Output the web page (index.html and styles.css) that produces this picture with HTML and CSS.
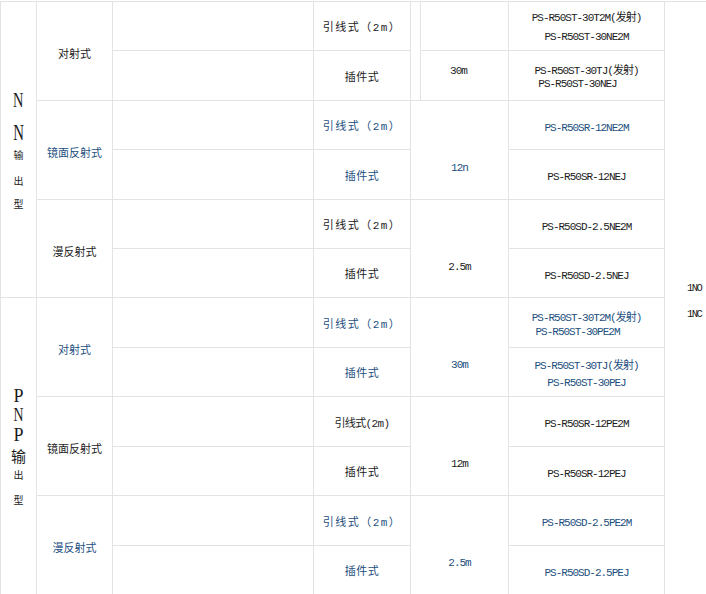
FILE: index.html
```html
<!DOCTYPE html>
<html lang="zh">
<head>
<meta charset="utf-8">
<title>PS-R50 型号表</title>
<link rel="stylesheet" href="styles.css">
</head>
<body>
<table class="spec">
  <colgroup>
    <col class="c-out"><col class="c-type"><col class="c-blank"><col class="c-wire"><col class="c-dist"><col class="c-model"><col class="c-contact">
  </colgroup>
  <tbody>
    <tr class="row-a">
      <td rowspan="6" class="out">
        <div class="stack stack-npn">
          <span class="lat n1">N</span>
          <span class="lat n2">N</span>
          <span class="cjk">输</span>
          <span class="cjk">出</span>
          <span class="cjk">型</span>
        </div>
      </td>
      <td rowspan="2" class="type">对射式</td>
      <td class="blank"></td>
      <td class="wire sp">引线式（2m）</td>
      <td rowspan="2" class="dist nested">
        <div class="inner">
          <div class="inner-top"></div>
          <div class="inner-bot">30m</div>
        </div>
      </td>
      <td class="model lines wide"><span>PS-R50ST-30T2M(发射)</span><span>PS-R50ST-30NE2M</span></td>
      <td rowspan="12" class="contact"><span>1NO</span><span>1NC</span></td>
    </tr>
    <tr class="row-b">
      <td class="blank"></td>
      <td class="wire">插件式</td>
      <td class="model lines tight"><span>PS-R50ST-30TJ(发射)</span><span class="shift">PS-R50ST-30NEJ</span></td>
    </tr>
    <tr class="row-a blue">
      <td rowspan="2" class="type">镜面反射式</td>
      <td class="blank"></td>
      <td class="wire sp">引线式（2m）</td>
      <td rowspan="2" class="dist">12n</td>
      <td class="model">PS-R50SR-12NE2M</td>
    </tr>
    <tr class="row-b">
      <td class="blank"></td>
      <td class="wire blue">插件式</td>
      <td class="model">PS-R50SR-12NEJ</td>
    </tr>
    <tr class="row-a">
      <td rowspan="2" class="type">漫反射式</td>
      <td class="blank"></td>
      <td class="wire sp">引线式（2m）</td>
      <td rowspan="2" class="dist">2.5m</td>
      <td class="model">PS-R50SD-2.5NE2M</td>
    </tr>
    <tr class="row-a">
      <td class="blank"></td>
      <td class="wire">插件式</td>
      <td class="model">PS-R50SD-2.5NEJ</td>
    </tr>
    <tr class="row-b blue">
      <td rowspan="6" class="out black">
        <div class="stack stack-pnp">
          <span class="lat">P</span>
          <span class="lat nn">N</span>
          <span class="lat">P</span>
          <span class="cjk big">输</span>
          <span class="cjk">出</span>
          <span class="cjk">型</span>
        </div>
      </td>
      <td rowspan="2" class="type">对射式</td>
      <td class="blank"></td>
      <td class="wire sp">引线式（2m）</td>
      <td rowspan="2" class="dist">30m</td>
      <td class="model lines mid"><span>PS-R50ST-30T2M(发射)</span><span class="shift">PS-R50ST-30PE2M</span></td>
    </tr>
    <tr class="row-a blue">
      <td class="blank"></td>
      <td class="wire">插件式</td>
      <td class="model lines loose"><span>PS-R50ST-30TJ(发射)</span><span>PS-R50ST-30PEJ</span></td>
    </tr>
    <tr class="row-b">
      <td rowspan="2" class="type">镜面反射式</td>
      <td class="blank"></td>
      <td class="wire plain">引线式(2m)</td>
      <td rowspan="2" class="dist">12m</td>
      <td class="model">PS-R50SR-12PE2M</td>
    </tr>
    <tr class="row-a">
      <td class="blank"></td>
      <td class="wire">插件式</td>
      <td class="model">PS-R50SR-12PEJ</td>
    </tr>
    <tr class="row-b blue">
      <td rowspan="2" class="type">漫反射式</td>
      <td class="blank"></td>
      <td class="wire sp">引线式（2m）</td>
      <td rowspan="2" class="dist">2.5m</td>
      <td class="model">PS-R50SD-2.5PE2M</td>
    </tr>
    <tr class="row-a blue">
      <td class="blank"></td>
      <td class="wire">插件式</td>
      <td class="model">PS-R50SD-2.5PEJ</td>
    </tr>
  </tbody>
</table>
</body>
</html>
```
FILE: styles.css
```css
html, body {
  margin: 0;
  padding: 0;
  background: #ffffff;
}

body {
  overflow: hidden;
  font-family: "Liberation Mono", "Noto Sans CJK SC", monospace;
  font-size: 11px;
  color: #1c1c1c;
}

.spec {
  border-collapse: collapse;
  table-layout: fixed;
  width: 720px;
  margin-top: 1px;
}

.c-out { width: 36px; }
.c-type { width: 76px; }
.c-blank { width: 201px; }
.c-wire { width: 97px; }
.c-dist { width: 98px; }
.c-model { width: 156px; }
.c-contact { width: 56px; }

.spec td {
  border: 1px solid #e3e3e3;
  padding: 0;
  text-align: center;
  vertical-align: middle;
  white-space: nowrap;
  line-height: 14px;
}

.row-a { height: 49px; }
.row-b { height: 50px; }

.spec .blue,
.spec .blue td { color: #1d4f80; }
.spec .blue td.black { color: #1c1c1c; }
.spec td.wire.blue { color: #1d4f80; }

.spec .type {
  font-family: "Noto Sans CJK SC", sans-serif;
  font-size: 11px;
  padding-top: 4px;
}

.spec .wire {
  font-size: 11px;
  letter-spacing: 0.5px;
  padding-top: 4px;
}
.spec .wire.sp { letter-spacing: 1.5px; }
.spec .wire.plain { letter-spacing: -0.6px; }

.spec .model {
  letter-spacing: -1px;
  padding-top: 5px;
}

.lines span {
  display: block;
}
.spec .lines.wide { line-height: 19px; padding-top: 4px; }
.spec .lines.tight { line-height: 13px; padding-top: 4px; }
.spec .lines.mid { line-height: 14px; padding-top: 5px; }
.spec .lines.loose { line-height: 17px; padding-top: 5px; }
.lines .shift { padding-right: 18px; }

.spec .dist {
  letter-spacing: -1px;
  padding-top: 36px;
}

.spec .dist.nested {
  padding: 0 0 0 9px;
  vertical-align: top;
}
.inner {
  border-left: 1px solid #e3e3e3;
  display: flex;
  flex-direction: column;
}
.inner-top {
  height: 48px;
  border-bottom: 1px solid #e3e3e3;
}
.inner-bot {
  height: 49px;
  padding-top: 13px;
  box-sizing: border-box;
  padding-right: 12px;
}

.spec td.contact {
  border-right: none;
  padding: 6px 0 0 22px;
  text-align: left;
  letter-spacing: -1.5px;
  font-size: 10.5px;
}
.contact span {
  display: block;
  line-height: 26px;
}

.spec td.out {
  padding-top: 2px;
}
.stack {
  display: flex;
  flex-direction: column;
  align-items: center;
}
.stack span {
  display: block;
}
.lat {
  font-family: "Liberation Serif", serif;
  font-size: 18px;
  line-height: 18px;
}
.cjk {
  font-family: "Noto Sans CJK SC", sans-serif;
  font-size: 10px;
  line-height: 14px;
}
.cjk.big {
  font-size: 15px;
  line-height: 16px;
}

.stack-npn .n1 {
  font-size: 20px;
  transform: scaleX(0.72);
}
.stack-npn .n2 {
  font-size: 24px;
  transform: scaleX(0.62);
  margin-top: 14px;
}
.stack-npn span:nth-child(3) { margin-top: 7px; }
.stack-npn span:nth-child(4) { margin-top: 12px; }
.stack-npn span:nth-child(5) { margin-top: 9px; }

.stack-pnp .nn {
  transform: scaleX(0.77);
  margin-top: 1px;
}
.stack-pnp span:nth-child(3) { margin-top: 2px; }
.stack-pnp span:nth-child(4) { margin-top: 4px; }
.stack-pnp span:nth-child(5) { margin-top: 4px; }
.stack-pnp span:nth-child(6) { margin-top: 11px; }
```
